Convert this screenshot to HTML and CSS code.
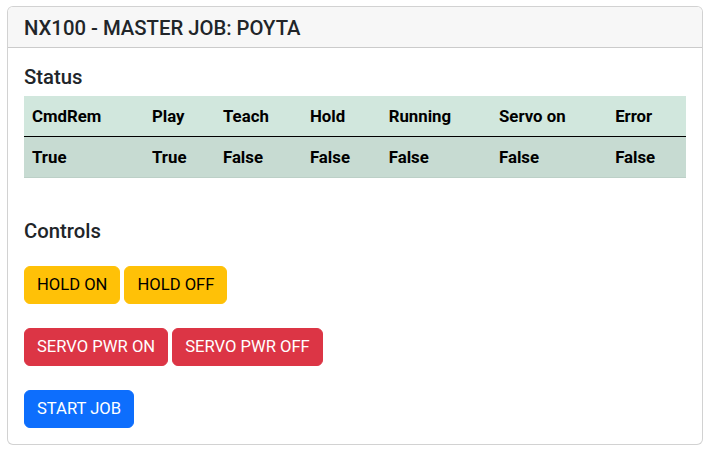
FILE: index.html
```html
<!DOCTYPE html>
<html lang="en">
<head>
<meta charset="utf-8">
<title>NX100</title>
<link rel="stylesheet" href="styles.css">
</head>
<body>
<div class="card">
  <div class="card-header"><h5 class="title">NX100 - MASTER JOB: POYTA</h5></div>
  <div class="card-body">
    <h5 class="section">Status</h5>
    <table class="status">
      <thead>
        <tr><th>CmdRem</th><th>Play</th><th>Teach</th><th>Hold</th><th>Running</th><th>Servo on</th><th>Error</th></tr>
      </thead>
      <tbody>
        <tr><td>True</td><td>True</td><td>False</td><td>False</td><td>False</td><td>False</td><td>False</td></tr>
      </tbody>
    </table>
    <h5 class="section controls">Controls</h5>
    <div class="btn-row">
      <button class="btn btn-warning">HOLD ON</button>
      <button class="btn btn-warning">HOLD OFF</button>
    </div>
    <div class="btn-row">
      <button class="btn btn-danger">SERVO PWR ON</button>
      <button class="btn btn-danger">SERVO PWR OFF</button>
    </div>
    <div class="btn-row">
      <button class="btn btn-primary">START JOB</button>
    </div>
  </div>
</div>
</body>
</html>
```

FILE: styles.css
```css
* { box-sizing: border-box; }
body {
  margin: 0;
  padding: 6px 7px 7px 7px;
  font-family: Roboto, "Liberation Sans", Arial, sans-serif;
  font-size: 16px;
  line-height: 1.5;
  color: #212529;
  background: #fff;
}
.card {
  border: 1px solid rgba(0,0,0,0.175);
  border-radius: 6px;
  background: #fff;
  overflow: hidden;
}
.card-header {
  padding: 8px 16px;
  background: #f7f7f7;
  border-bottom: 1px solid rgba(0,0,0,0.175);
}
.title, .section {
  margin: 0;
  font-size: 20.3px;
  font-weight: 500;
  line-height: 24px;
  padding-top: 1px;
  height: 24px;
}
.card-body {
  padding: 16px;
}
.section { margin-bottom: 8px; }
.controls { margin-top: 40px; margin-bottom: 24px; }
.status {
  width: 100%;
  border-collapse: collapse;
  margin-bottom: 16px;
  color: #000;
}
.status th, .status td {
  text-align: left;
  font-weight: 700;
  font-size: 16.8px;
  padding: 8px;
  line-height: 24px;
}
.status thead tr {
  background: #d1e7dd;
  border-bottom: 1px solid #000;
}
.status tbody tr {
  background: #c7dbd2;
  border-bottom: 1px solid #bcd0c7;
}
.btn-row {
  display: flex;
  gap: 4px;
  margin-bottom: 24px;
}
.btn-row:last-child { margin-bottom: 0; }
.btn {
  font-family: inherit;
  font-size: 16.6px;
  line-height: 24px;
  padding: 6px 12px;
  border: 1px solid transparent;
  border-radius: 6px;
  cursor: pointer;
}
.btn-warning { background: #ffc107; border-color: #ffc107; color: #000; }
.btn-danger { background: #dc3545; border-color: #dc3545; color: #fff; }
.btn-primary { background: #0d6efd; border-color: #0d6efd; color: #fff; }
```
